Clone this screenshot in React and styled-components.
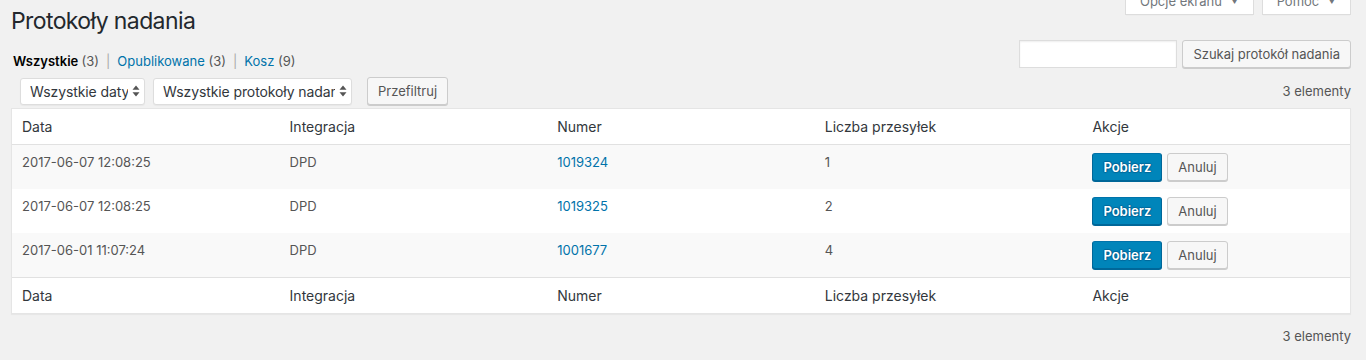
import React from 'react';
import styled, { createGlobalStyle } from 'styled-components';

const GlobalStyle = createGlobalStyle`
  body {
    margin: 0;
    background: #f1f1f1;
    font-family: Inter, 'Noto Sans', sans-serif;
    font-size: 13px;
    color: #444;
  }
`;

const Page = styled.div`
  padding: 0 15px 0 11px;
`;

const TopBar = styled.div`
  display: flex;
  justify-content: space-between;
  align-items: flex-start;
`;

const Title = styled.h1`
  margin: 7px 0 0;
  font-size: 23px;
  font-weight: 400;
  line-height: 29px;
  letter-spacing: -0.6px;
  color: #23282d;
`;

const ScreenMeta = styled.div`
  display: flex;
  gap: 8px;
  margin-top: -13px;
`;

const MetaTab = styled.button`
  height: 28px;
  width: ${(p) => p.w}px;
  box-sizing: border-box;
  background: #fff;
  border: 1px solid #ddd;
  border-top: none;
  box-shadow: 0 1px 1px -1px rgba(0, 0, 0, 0.1);
  font-family: inherit;
  font-size: 13px;
  color: #72777c;
  padding: 0;
  display: flex;
  align-items: center;
  justify-content: center;
  gap: 8px;
`;

const Caret = styled.span`
  font-size: 9px;
`;

const FilterRow = styled.div`
  display: flex;
  justify-content: space-between;
  align-items: flex-start;
  margin-top: 4px;
`;

const Views = styled.ul`
  list-style: none;
  margin: 0;
  padding: 11px 0 0 2px;
  display: flex;
  gap: 7px;
  line-height: 20px;
  color: #666;
`;

const ViewLink = styled.li`
  color: ${(p) => (p.current ? '#000' : '#0073aa')};
  font-weight: ${(p) => (p.current ? 600 : 400)};
  span {
    color: #555;
    font-weight: 400;
  }
`;

const Sep = styled.li`
  color: #aaa;
`;

const SearchBox = styled.div`
  display: flex;
  gap: 5px;
`;

const SearchInput = styled.input`
  width: 158px;
  height: 28px;
  box-sizing: border-box;
  border: 1px solid #ddd;
  box-shadow: inset 0 1px 2px rgba(0, 0, 0, 0.07);
  background: #fff;
  outline: none;
`;

const Button = styled.button`
  height: 28px;
  box-sizing: border-box;
  padding: 0 10px;
  border-radius: 3px;
  font-family: inherit;
  font-size: 13px;
  line-height: 26px;
  white-space: nowrap;
  cursor: pointer;
  background: ${(p) => (p.primary ? '#0085ba' : '#f7f7f7')};
  color: ${(p) => (p.primary ? '#fff' : '#555')};
  border: 1px solid ${(p) => (p.primary ? '#006799' : '#ccc')};
  border-top-color: ${(p) => (p.primary ? '#0073aa' : '#ccc')};
  box-shadow: 0 1px 0 ${(p) => (p.primary ? '#006799' : '#ccc')};
  font-weight: ${(p) => (p.primary ? 600 : 400)};
  text-shadow: ${(p) => (p.primary ? '0 -1px 1px #006799, 1px 0 1px #006799, 0 1px 1px #006799, -1px 0 1px #006799' : 'none')};
`;

const TableNav = styled.div`
  display: flex;
  align-items: center;
  height: 28px;
  margin-top: ${(p) => p.top}px;
  padding-left: ${(p) => (p.bottom ? 0 : 9)}px;
`;

const Select = styled.div`
  display: flex;
  align-items: center;
  gap: 4px;
  width: ${(p) => p.w}px;
  height: 27px;
  box-sizing: border-box;
  margin-right: ${(p) => p.mr}px;
  padding: 0 4px 0 9px;
  background: #fff;
  border: 1px solid #ddd;
  border-radius: 3px;
  box-shadow: 0 1px 1px rgba(0, 0, 0, 0.04);
  font-size: 14px;
  letter-spacing: -0.1px;
  color: #32373c;
`;

const SelectLabel = styled.span`
  flex: 1;
  overflow: hidden;
  white-space: nowrap;
`;

const Count = styled.div`
  margin-left: auto;
  color: #555;
  font-size: 13px;
`;

const Table = styled.table`
  width: 100%;
  border-spacing: 0;
  margin-top: 3px;
  background: #fff;
  border: 1px solid #e5e5e5;
  box-shadow: 0 1px 1px rgba(0, 0, 0, 0.04);
  table-layout: fixed;
`;

const Th = styled.th`
  text-align: left;
  padding: 8px 10px;
  font-size: 14px;
  font-weight: 400;
  line-height: 19px;
  color: #32373c;
  border-bottom: ${(p) => (p.foot ? 'none' : '1px solid #e1e1e1')};
  border-top: ${(p) => (p.foot ? '1px solid #e1e1e1' : 'none')};
`;

const Row = styled.tr`
  background: ${(p) => (p.striped ? '#f9f9f9' : '#fff')};
`;

const Td = styled.td`
  padding: 8px 10px;
  vertical-align: top;
  font-size: 13px;
  line-height: 1.5em;
  color: #555;
`;

const NumLink = styled.a`
  color: #0073aa;
  text-decoration: none;
`;

const Actions = styled.div`
  display: flex;
  gap: 5px;
`;

const Arrows = () => (
  <svg width="8" height="12" viewBox="0 0 8 12">
    <path d="M4 0.5 L7.5 4.8 H0.5 Z M4 11.5 L7.5 7.2 H0.5 Z" fill="#555" />
  </svg>
);

const rows = [
  { date: '2017-06-07 12:08:25', num: '1019324', count: 1 },
  { date: '2017-06-07 12:08:25', num: '1019325', count: 2 },
  { date: '2017-06-01 11:07:24', num: '1001677', count: 4 },
];

const cols = ['Data', 'Integracja', 'Numer', 'Liczba przesyłek', 'Akcje'];

export default function App() {
  return (
    <Page>
      <GlobalStyle />
      <TopBar>
        <Title>Protokoły nadania</Title>
        <ScreenMeta>
          <MetaTab w={129}>Opcje ekranu <Caret>▼</Caret></MetaTab>
          <MetaTab w={89}>Pomoc <Caret>▼</Caret></MetaTab>
        </ScreenMeta>
      </TopBar>

      <FilterRow>
        <Views>
          <ViewLink current>Wszystkie <span>(3)</span></ViewLink>
          <Sep>|</Sep>
          <ViewLink>Opublikowane <span>(3)</span></ViewLink>
          <Sep>|</Sep>
          <ViewLink>Kosz <span>(9)</span></ViewLink>
        </Views>
        <SearchBox>
          <SearchInput type="search" />
          <Button>Szukaj protokół nadania</Button>
        </SearchBox>
      </FilterRow>

      <TableNav top={6}>
        <Select w={125} mr={8}>
          <SelectLabel>Wszystkie daty</SelectLabel>
          <Arrows />
        </Select>
        <Select w={199} mr={15}>
          <SelectLabel>Wszystkie protokoły nadania</SelectLabel>
          <Arrows />
        </Select>
        <Button>Przefiltruj</Button>
        <Count>3 elementy</Count>
      </TableNav>

      <Table>
        <thead>
          <tr>
            {cols.map((c) => <Th key={c}>{c}</Th>)}
          </tr>
        </thead>
        <tbody>
          {rows.map((r, i) => (
            <Row key={r.num} striped={i % 2 === 0}>
              <Td>{r.date}</Td>
              <Td>DPD</Td>
              <Td><NumLink href="#">{r.num}</NumLink></Td>
              <Td>{r.count}</Td>
              <Td>
                <Actions>
                  <Button primary>Pobierz</Button>
                  <Button>Anuluj</Button>
                </Actions>
              </Td>
            </Row>
          ))}
        </tbody>
        <tfoot>
          <tr>
            {cols.map((c) => <Th key={c} foot>{c}</Th>)}
          </tr>
        </tfoot>
      </Table>

      <TableNav top={8} bottom>
        <Count>3 elementy</Count>
      </TableNav>
    </Page>
  );
}
